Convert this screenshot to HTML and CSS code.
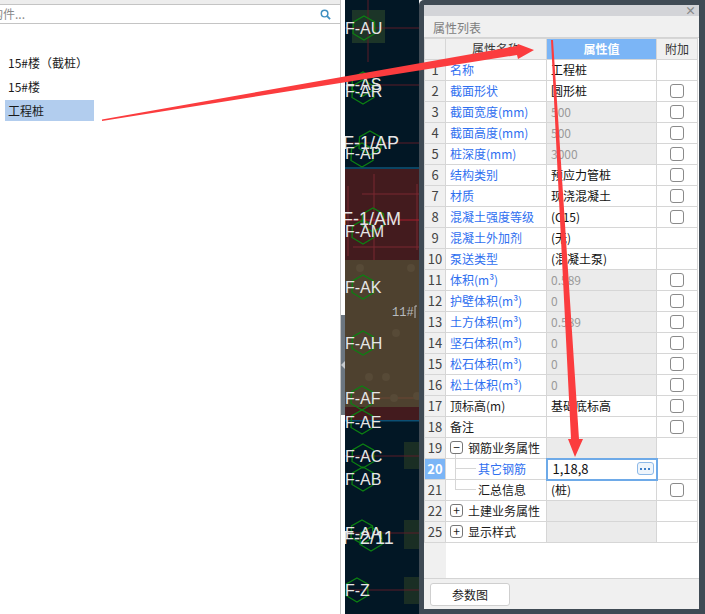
FILE: index.html
```html
<!DOCTYPE html>
<html lang="zh-CN">
<head>
  <meta charset="UTF-8">
  <title>属性列表</title>
  <link rel="stylesheet" href="styles.css">
</head>
<body>

<div class="app">
  <!-- left list -->
  <div class="left-pane">
    <div class="top-strip"></div>
    <div class="search-row">
      <span class="search-text">构件...</span>
      <svg class="search-icon" width="11" height="11" viewBox="0 0 12 12">
        <circle cx="5" cy="5" r="3.6" fill="none" stroke="#3f8fc0" stroke-width="1.6"/>
        <path d="M7.8 7.8 L11 11" stroke="#3f8fc0" stroke-width="2"/>
      </svg>
    </div>
    <ul class="item-list">
      <li>15#楼（截桩）</li>
      <li>15#楼</li>
      <li class="selected">工程桩</li>
    </ul>
  </div>

  <div class="splitter"><span class="splitter-arrow"></span></div>

  <!-- cad drawing -->
  <svg class="cad" width="74" height="614" viewBox="345 0 74 614">
    <defs>
      <polygon id="hex" points="0,-12 10.5,-6 11,5.5 0,12 -11,5.5 -10.5,-6" fill="none" stroke="#0c8012" stroke-width="1.3"/>
    </defs>
    <rect x="345" y="0" width="74" height="614" fill="#021725"/>
    <rect x="345" y="169" width="74" height="91" fill="#431b1e"/>
    <rect x="345" y="167" width="74" height="2" fill="#0b4563"/>
    <rect x="345" y="260" width="74" height="147" fill="#4e412f"/>
    <rect x="345" y="407" width="74" height="13" fill="#431b1e"/>
    <rect x="345" y="420" width="74" height="1.5" fill="#0b4f73"/>

    <rect x="352" y="10" width="33" height="33" fill="#1c3528"/>
    <rect x="404" y="442" width="15" height="27" fill="#1a2e24"/>
    <rect x="404" y="520" width="15" height="29" fill="#1a2e24"/>
    <rect x="404" y="577" width="15" height="27" fill="#1a2e24"/>

    <g stroke="#5b1c28" stroke-width="1" fill="none">
      <path d="M345 28 H419 M368 0 V62 M345 85 H419 M345 143 H419"/>
      <path d="M345 456 H419 M345 533 H419 M345 590 H419"/>
    </g>
    <g stroke="#7a2830" stroke-width="1" fill="none">
      <path d="M374 174 V260 M348 186 V256 M362 194 H419 M353 247 H419 M417 184 V250"/>
      <path d="M345 398 H419" stroke="#6b4634"/>
    </g>
    <path d="M345 220 H419" stroke="#a81f2c" stroke-width="1"/>

    <g fill="#574a37">
      <circle cx="360" cy="268" r="4"/><circle cx="411" cy="268" r="4"/>
      <circle cx="396" cy="333" r="4"/><circle cx="386" cy="377" r="4"/>
      <circle cx="369" cy="377" r="4"/><circle cx="394" cy="398" r="4"/>
      <circle cx="417" cy="396" r="4"/>
    </g>

    <use href="#hex" x="364" y="28"/>
    <use href="#hex" x="363" y="84"/>
    <use href="#hex" x="363" y="92"/>
    <use href="#hex" x="370" y="143"/>
    <use href="#hex" x="362" y="155"/>
    <use href="#hex" x="373" y="220"/>
    <use href="#hex" x="363" y="232"/>
    <use href="#hex" x="363" y="287"/>
    <use href="#hex" x="363" y="343"/>
    <use href="#hex" x="362" y="398"/>
    <use href="#hex" x="362" y="422"/>
    <use href="#hex" x="363" y="456"/>
    <use href="#hex" x="363" y="479"/>
    <use href="#hex" x="362" y="532"/>
    <use href="#hex" x="371" y="539"/>
    <use href="#hex" x="357" y="590"/>

    <g class="axis">
      <text x="345" y="34">F-AU</text>
      <text x="345" y="90">F-AS</text>
      <text x="345" y="97">F-AR</text>
      <text class="axis-big" x="343" y="149">F-1/AP</text>
      <text x="345" y="159">F-AP</text>
      <text class="axis-big" x="342" y="225">F-1/AM</text>
      <text x="345" y="237">F-AM</text>
      <text x="345" y="293">F-AK</text>
      <text x="345" y="349">F-AH</text>
      <text x="345" y="404">F-AF</text>
      <text x="345" y="428">F-AE</text>
      <text x="345" y="462">F-AC</text>
      <text x="345" y="485">F-AB</text>
      <text x="345" y="539">F-AA</text>
      <text class="axis-big" x="343" y="544">F-2/11</text>
      <text x="345" y="596">F-Z</text>
    </g>
    <text class="floor" x="392" y="316">11#</text>
    <path d="M417 306 H415 V318" stroke="#b8bcc0" fill="none"/>
  </svg>

  <!-- property panel -->
  <div class="panel">
    <div class="panel-inner">
      <div class="title-bar"><span class="close">×</span></div>
      <div class="panel-title">属性列表</div>
      <div class="table-area">
        <table class="props">
          <colgroup>
            <col class="c-num"><col class="c-name"><col class="c-value"><col class="c-add">
          </colgroup>
          <thead>
            <tr><th></th><th>属性名称</th><th class="active">属性值</th><th>附加</th></tr>
          </thead>
          <tbody>
            <tr><td class="num">1</td><td class="name">名称</td><td class="val">工程桩</td><td></td></tr>
            <tr><td class="num">2</td><td class="name">截面形状</td><td class="val">圆形桩</td><td><span class="check"></span></td></tr>
            <tr><td class="num">3</td><td class="name">截面宽度(mm)</td><td class="val off">500</td><td><span class="check"></span></td></tr>
            <tr><td class="num">4</td><td class="name">截面高度(mm)</td><td class="val off">500</td><td><span class="check"></span></td></tr>
            <tr><td class="num">5</td><td class="name">桩深度(mm)</td><td class="val off">3000</td><td><span class="check"></span></td></tr>
            <tr><td class="num">6</td><td class="name">结构类别</td><td class="val">预应力管桩</td><td><span class="check"></span></td></tr>
            <tr><td class="num">7</td><td class="name">材质</td><td class="val">现浇混凝土</td><td><span class="check"></span></td></tr>
            <tr><td class="num">8</td><td class="name">混凝土强度等级</td><td class="val">(C15)</td><td><span class="check"></span></td></tr>
            <tr><td class="num">9</td><td class="name">混凝土外加剂</td><td class="val">(无)</td><td></td></tr>
            <tr><td class="num">10</td><td class="name">泵送类型</td><td class="val">(混凝土泵)</td><td></td></tr>
            <tr><td class="num">11</td><td class="name">体积(m³)</td><td class="val off">0.589</td><td><span class="check"></span></td></tr>
            <tr><td class="num">12</td><td class="name">护壁体积(m³)</td><td class="val off">0</td><td><span class="check"></span></td></tr>
            <tr><td class="num">13</td><td class="name">土方体积(m³)</td><td class="val off">0.589</td><td><span class="check"></span></td></tr>
            <tr><td class="num">14</td><td class="name">坚石体积(m³)</td><td class="val off">0</td><td><span class="check"></span></td></tr>
            <tr><td class="num">15</td><td class="name">松石体积(m³)</td><td class="val off">0</td><td><span class="check"></span></td></tr>
            <tr><td class="num">16</td><td class="name">松土体积(m³)</td><td class="val off">0</td><td><span class="check"></span></td></tr>
            <tr><td class="num">17</td><td class="name plain">顶标高(m)</td><td class="val">基础底标高</td><td><span class="check"></span></td></tr>
            <tr><td class="num">18</td><td class="name plain">备注</td><td class="val"></td><td><span class="check"></span></td></tr>
            <tr><td class="num">19</td><td class="group"><span class="toggle">−</span>钢筋业务属性<span class="tree-trunk"></span></td><td class="val off"></td><td></td></tr>
            <tr><td class="num current">20</td><td class="child name"><span class="tree-branch"></span>其它钢筋</td><td class="val editing"><span class="edit-text">1,18,8</span><span class="more"><i></i><i></i><i></i></span></td><td></td></tr>
            <tr><td class="num">21</td><td class="child plain"><span class="tree-branch"></span>汇总信息</td><td class="val">(桩)</td><td><span class="check"></span></td></tr>
            <tr><td class="num">22</td><td class="group"><span class="toggle">+</span>土建业务属性</td><td class="val off"></td><td></td></tr>
            <tr><td class="num">25</td><td class="group"><span class="toggle">+</span>显示样式</td><td class="val off"></td><td></td></tr>
          </tbody>
        </table>
        <div class="num-rest"></div>
      </div>
      <div class="panel-footer">
        <button class="param-btn">参数图</button>
      </div>
    </div>
  </div>
</div>

<!-- red annotation arrows drawn on top of the screenshot -->
<svg class="arrows" width="705" height="614" viewBox="0 0 705 614">
  <polygon fill="#fb3c3e" points="102,119.5 517,46 518,44 534,50 518,59 517,55 102,121"/>
  <polygon fill="#fb3c3e" points="551,40 553,40 579,439 583,439 575,457 568,439 571,439"/>
</svg>

</body>
</html>
```

FILE: styles.css
```css
* {
  margin: 0;
  padding: 0;
  box-sizing: border-box;
}

body {
  width: 705px;
  height: 614px;
  overflow: hidden;
  position: relative;
  background: #fff;
  font-family: "Noto Sans CJK SC", "Noto Sans", sans-serif;
  font-size: 12px;
  color: #1a1a1a;
}

.app {
  display: flex;
  height: 614px;
}

/* left list */
.left-pane {
  width: 341px;
  border-right: 1px solid #c4c4c4;
  flex-shrink: 0;
}

.top-strip {
  height: 5px;
  background: #ededed;
  border-bottom: 1px solid #c4c4c4;
}

.search-row {
  height: 19px;
  border-bottom: 1px solid #c4c4c4;
  display: flex;
  justify-content: space-between;
  align-items: center;
  padding-right: 9px;
  overflow: hidden;
}

.search-text {
  margin-left: -9px;
  color: #8a8a8a;
  line-height: 18px;
}

.search-icon {
  display: block;
}

.item-list {
  list-style: none;
  padding: 28px 0 0 5px;
}

.item-list li {
  width: 89px;
  height: 21px;
  margin-bottom: 3px;
  line-height: 21px;
  padding-left: 3px;
  white-space: nowrap;
}

.item-list .selected {
  background: #b2cdee;
}

.splitter {
  width: 4px;
  flex-shrink: 0;
  padding-top: 315px;
}

.splitter-arrow {
  display: block;
  height: 100px;
  background: #6c7680;
  position: relative;
}

.splitter-arrow::after {
  content: "";
  position: absolute;
  left: 0;
  top: 46px;
  border: 4px solid transparent;
  border-right-color: #c6cace;
  border-left-width: 0;
}

/* cad drawing */
.cad {
  display: block;
  flex-shrink: 0;
}

.axis text {
  font-family: "Liberation Sans", sans-serif;
  font-size: 16px;
  fill: #e6e6e6;
}

.axis .axis-big {
  font-size: 18px;
}

.floor {
  font-family: "Liberation Mono", monospace;
  font-size: 12px;
  fill: #b8bcc0;
}

/* property panel */
.panel {
  flex: 1;
  background: #3f4a54;
  padding: 5px 6px 5px 5px;
  border-top-left-radius: 5px;
}

.panel-inner {
  height: 604px;
  display: flex;
  flex-direction: column;
  background: #fff;
}

.title-bar {
  height: 11px;
  background: #d3d4d8;
  display: flex;
  justify-content: flex-end;
  align-items: center;
  padding-right: 3px;
}

.close {
  color: #888;
  font-size: 11px;
  line-height: 11px;
  font-weight: 700;
}

.panel-title {
  height: 22px;
  line-height: 23px;
  padding-left: 9px;
  background: #f0f0f0;
  color: #7d7d7d;
  font-size: 12px;
  border-bottom: 1px solid #d4d4d4;
}

.table-area {
  flex: 1;
  display: flex;
  flex-direction: column;
}

.props {
  width: 273px;
  table-layout: fixed;
  border-collapse: collapse;
}

.c-num { width: 21px; }
.c-name { width: 101px; }
.c-value { width: 110px; }
.c-add { width: 41px; }

.props th,
.props td {
  height: 21px;
  border: 1px solid #d6d6d6;
  font-weight: 400;
  line-height: 18px;
  white-space: nowrap;
  overflow: hidden;
}

.props th {
  background: #f0f0f0;
  text-align: center;
  color: #333;
}

.props th.active {
  background: #7bb5f6;
  color: #fff;
  font-weight: 700;
}

.props td.num {
  background: #f0f0f0;
  text-align: center;
  color: #444;
  font-size: 13px;
}

.props td.current {
  background: #7bb5f6;
  color: #fff;
  font-weight: 700;
}

.props td.name {
  color: #2f6ff0;
  padding-left: 4px;
}

.props td.plain {
  color: #1a1a1a;
  padding-left: 4px;
}

.props td.val {
  padding-left: 4px;
  color: #111;
}

.props td.off {
  background: #ebebeb;
  color: #9a9a9a;
}

.props td.editing {
  border: 2px solid #6eaae8;
  padding: 0 2px 0 5px;
}

.edit-text {
  float: left;
  font-size: 13px;
}

.more {
  float: right;
  display: flex;
  justify-content: center;
  align-items: center;
  gap: 2px;
  width: 17px;
  height: 13px;
  margin-top: 2px;
  border: 1px solid #8db9e8;
  border-radius: 3px;
  background: #eef5fc;
}

.more i {
  width: 2px;
  height: 2px;
  background: #3f7fc8;
}

.check {
  display: block;
  width: 14px;
  height: 14px;
  margin: 0 auto;
  border: 1px solid #8a8a8a;
  border-radius: 3px;
  background: #fff;
}

.props td.group {
  position: relative;
  padding-left: 4px;
  overflow: visible;
}

.toggle {
  display: inline-block;
  width: 13px;
  height: 13px;
  margin-right: 5px;
  border: 1px solid #777;
  border-radius: 3px;
  background: #fff;
  font-size: 12px;
  line-height: 10px;
  text-align: center;
  vertical-align: 1px;
}

.props td.child {
  position: relative;
  padding-left: 32px;
  overflow: visible;
}

.tree-trunk {
  position: absolute;
  left: 9px;
  top: 16px;
  width: 1px;
  height: 36px;
  background: #d6d6d6;
  z-index: 1;
}

.tree-branch {
  position: absolute;
  left: 9px;
  top: 9px;
  width: 21px;
  height: 1px;
  background: #d6d6d6;
}

.num-rest {
  flex: 1;
  width: 22px;
  background: #f0f0f0;
}

.panel-footer {
  height: 31px;
  background: #f0f0f0;
  border-top: 1px solid #d4d4d4;
  padding: 4px 6px;
}

.param-btn {
  display: block;
  width: 80px;
  height: 23px;
  border: 1px solid #cfcfcf;
  border-radius: 3px;
  background: #fff;
  font-family: inherit;
  font-size: 12px;
  color: #1a1a1a;
}

/* annotation */
.arrows {
  position: absolute;
  left: 0;
  top: 0;
}
```
